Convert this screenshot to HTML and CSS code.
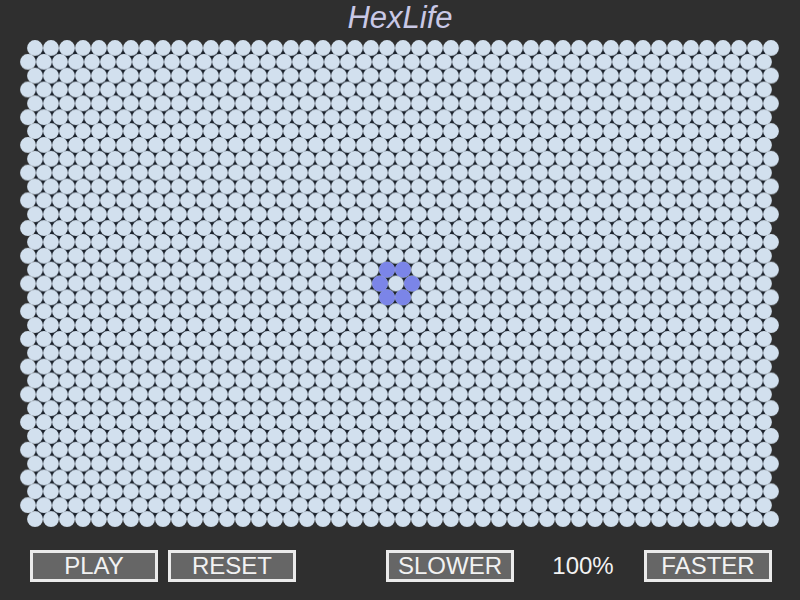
FILE: index.html
```html
<!DOCTYPE html>
<html>
<head>
<meta charset="utf-8">
<title>HexLife</title>
<link rel="stylesheet" href="styles.css">
</head>
<body>
<h1 class="title">HexLife</h1>
<svg class="board" width="800" height="504" viewBox="0 36 800 504" xmlns="http://www.w3.org/2000/svg">
  <defs>
    <pattern id="evenRow" patternUnits="userSpaceOnUse" x="27" y="40" width="16" height="27.7128">
      <circle cx="8" cy="8" r="7.92" fill="#d2e0ee"/>
    </pattern>
    <pattern id="oddRow" patternUnits="userSpaceOnUse" x="20" y="53.8564" width="16" height="27.7128">
      <circle cx="8" cy="8" r="7.92" fill="#d2e0ee"/>
    </pattern>
  </defs>
  <rect class="gaps" x="35" y="48" width="730" height="471"/>
  <rect x="27" y="40" width="752" height="487.12" fill="url(#evenRow)"/>
  <rect x="20" y="53.8564" width="752" height="459.40" fill="url(#oddRow)"/>
  <g class="live">
    <circle cx="387" cy="269.70" r="7.92"/>
    <circle cx="403" cy="269.70" r="7.92"/>
    <circle cx="380" cy="283.56" r="7.92"/>
    <circle cx="412" cy="283.56" r="7.92"/>
    <circle cx="387" cy="297.42" r="7.92"/>
    <circle cx="403" cy="297.42" r="7.92"/>
  </g>
</svg>
<div class="controls">
  <div class="group">
    <button class="btn">PLAY</button>
    <button class="btn">RESET</button>
  </div>
  <div class="group speed-group">
    <button class="btn">SLOWER</button>
    <span class="speed">100%</span>
    <button class="btn">FASTER</button>
  </div>
</div>
</body>
</html>
```
FILE: styles.css
```css
html, body {
  margin: 0;
  padding: 0;
  background: #2f2f2f;
  width: 800px;
  height: 600px;
  overflow: hidden;
}

.title {
  margin: 0;
  height: 36px;
  line-height: 36px;
  text-align: center;
  font-family: "Liberation Sans", Arial, sans-serif;
  font-style: italic;
  font-weight: normal;
  font-size: 31px;
  color: #c9c8e6;
}

.board {
  display: block;
}

.gaps {
  fill: #1b222c;
}

.live circle {
  fill: #7b85e8;
}

.controls {
  display: flex;
  align-items: center;
  margin-top: 10px;
  padding-left: 30px;
  gap: 90px;
}

.group {
  display: flex;
  align-items: center;
  gap: 10px;
}

.speed-group {
  gap: 0;
}

.btn {
  box-sizing: border-box;
  width: 128px;
  height: 32px;
  padding: 0;
  margin: 0;
  border: 3px solid #ebebeb;
  background: #666666;
  color: #f2f2f2;
  font-family: "Liberation Sans", Arial, sans-serif;
  font-size: 24px;
  line-height: 26px;
  text-align: center;
}

.speed {
  width: 130px;
  padding-left: 8px;
  box-sizing: border-box;
  text-align: center;
  font-family: "Liberation Sans", Arial, sans-serif;
  font-size: 24px;
  color: #f2f2f2;
}
```
